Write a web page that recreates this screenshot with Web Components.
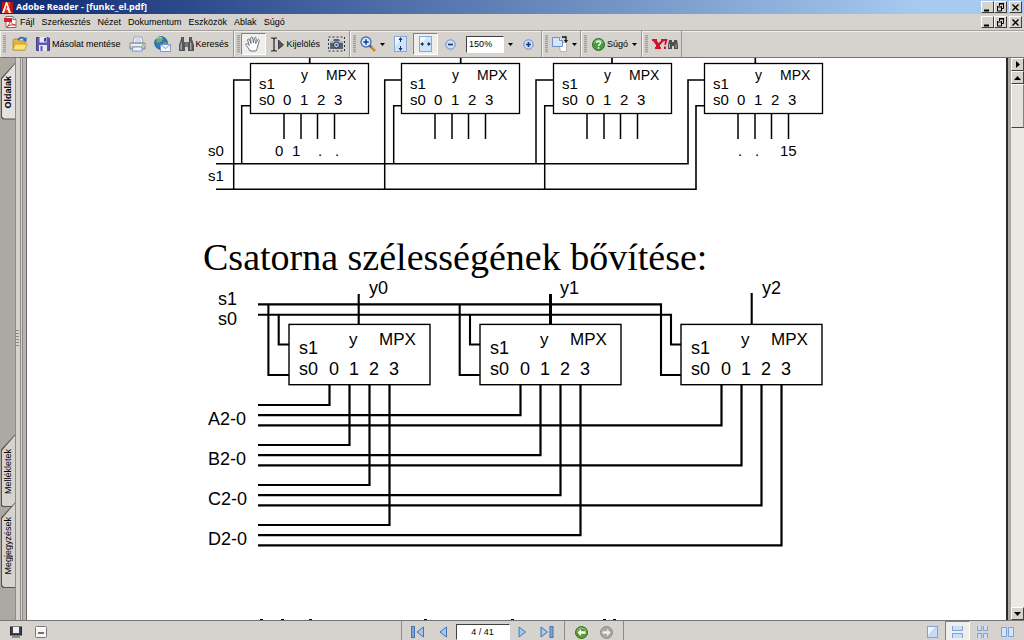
<!DOCTYPE html>
<html lang="hu">
<head>
<meta charset="utf-8">
<title>Adobe Reader - [funkc_el.pdf]</title>
<style>
  html, body {
    margin: 0;
    height: 100%;
  }

  body {
    font: 9px/12px "Liberation Sans", Arial, sans-serif;
    color: #000;
    background: #d6d3ce;
    overflow: hidden;
    --face: #d6d3ce;
    --dock: #aca8a2;
  }
</style>
</head>
<body>
<reader-window>
  <title-bar slot="title">Adobe Reader - [funkc_el.pdf]</title-bar>
  <menu-bar slot="menu">
    <button>Fájl</button>
    <button>Szerkesztés</button>
    <button>Nézet</button>
    <button>Dokumentum</button>
    <button>Eszközök</button>
    <button>Ablak</button>
    <button>Súgó</button>
  </menu-bar>

  <tool-group slot="tools">
    <tool-button icon="open" name="Megnyitás"></tool-button>
    <tool-button icon="save">Másolat mentése</tool-button>
    <tool-button icon="print" name="Nyomtatás"></tool-button>
    <tool-button icon="mail" name="E-mail"></tool-button>
    <tool-button icon="find">Keresés</tool-button>
  </tool-group>
  <tool-group slot="tools">
    <tool-button icon="hand" name="Kéz" pressed></tool-button>
    <tool-button icon="select">Kijelölés</tool-button>
    <tool-button icon="camera" name="Pillanatfelvétel"></tool-button>
  </tool-group>
  <tool-group slot="tools">
    <tool-button icon="zoom" name="Nagyítás" drop></tool-button>
    <tool-button icon="fitpage" name="Teljes oldal"></tool-button>
    <tool-button icon="fitwidth" name="Oldalszélesség" pressed></tool-button>
    <tool-button icon="minus" name="Kicsinyítés"></tool-button>
    <zoom-select></zoom-select>
    <tool-button icon="plus" name="Nagyítás"></tool-button>
  </tool-group>
  <tool-group slot="tools">
    <tool-button icon="rotate" name="Forgatás" drop></tool-button>
  </tool-group>
  <tool-group slot="tools">
    <tool-button icon="help" drop>Súgó</tool-button>
  </tool-group>
  <tool-group slot="tools">
    <tool-button icon="yahoo" name="Yahoo"></tool-button>
  </tool-group>

  <side-tabs slot="side">
    <side-tab slot="top" active>Oldalak</side-tab>
    <side-tab>Mellékletek</side-tab>
    <side-tab>Megjegyzések</side-tab>
  </side-tabs>

  <pdf-page slot="page">
    <mpx-tree></mpx-tree>
    <h1>Csatorna szélességének bővítése:</h1>
    <mpx-width></mpx-width>
    <next-line></next-line>
  </pdf-page>

  <scroll-column slot="scroll"></scroll-column>
  <status-bar slot="status"></status-bar>
</reader-window>

<script>
const ICONS = {
  adobe: [11, 11, `<rect width="11" height="11" fill="#e23a22"/><path d="M0 0h4L1 9H0zM11 0H8v10h3z" fill="#b8160e"/><path d="M5 0l4 11H7L5.500 7.500 4 8l1.500-3L4.500 3 2 11H0L4 0z" fill="#fff"/>`],
  pdf: [13, 12, `<path d="M2 .5h7l3 3v8H2z" fill="#fff" stroke="#777"/><path d="M9 .5v3h3" fill="#ddd" stroke="#777"/><path d="M0 2h8v4H0z" fill="#d8222a"/><path d="M3 11C5 9 6.500 6 6 4.500 7 7 9 9 11.500 9 8 8.500 5 9 3 11z" fill="none" stroke="#d8222a"/>`],
  open: [16, 16, `<path d="M1 5l1-2h4l1 2h6v9H1z" fill="#e9b63a" stroke="#a67c1c" stroke-width=".7"/><path d="M1 14L3 8h12l-2 6z" fill="#ffe36b" stroke="#b8902a" stroke-width=".7"/><path d="M6 4C8 1 11 1 13 3" fill="none" stroke="#2a68b8" stroke-width="1.700"/><path d="M14.500 1v5l-4-2z" fill="#2a68b8"/>`],
  save: [14, 14, `<path d="M.5.5h11l2 1v12H.5z" fill="#5e5aae" stroke="#45418c"/><rect x="3.500" y="0" width="7" height="5.500" fill="#e8ecf8"/><rect x="8" y="1" width="2" height="3.500" fill="#45418c"/><rect x="3" y="8" width="8" height="6" fill="#e8e8f0"/><rect x="4.500" y="9" width="2" height="5" fill="#5e5aae"/>`],
  print: [17, 16, `<path d="M4 7l1-6h8l1 6z" fill="#f7f9ff" stroke="#8a94a8" stroke-width=".8"/><path d="M6 3h6M6 5h6" stroke="#a9bfe4"/><path d="M1 7h15v6H1z" fill="#c5c5c9" stroke="#77777c" stroke-width=".8"/><path d="M1.500 8h14v2h-14z" fill="#ededf0"/><path d="M4 11h9v4H3z" fill="#eef5ff" stroke="#5a86c4" stroke-width=".8"/><circle cx="14" cy="9" r=".8" fill="#3a3"/>`],
  mail: [17, 16, `<circle cx="7" cy="7" r="6.400" fill="#2f78c0" stroke="#1c4f8c" stroke-width=".7"/><path d="M3 3c2-2 5-2 6 0L7 6l-3 1-2-1zM9 7l4-1-1 4-3 2z" fill="#6eb35a"/><path d="M2 3c2-2 5-2 6-1" stroke="#b7dcff" fill="none"/><path d="M6.500 8.500h10v7h-10z" fill="#f1f6ff" stroke="#6d8cc0" stroke-width=".8"/><path d="M6.500 8.500l5 4 5-4" fill="none" stroke="#6d8cc0" stroke-width=".8"/>`],
  find: [15, 14, `<path d="M2 2h3v3h1v9H0V8zM13 2h-3v3H9v9h6V8z" fill="#55565a"/><path d="M6 5h3v5H6z" fill="#77787c"/><path d="M1.500 8l1.500-4v9H1.500zM11 4l1.500 3v6H11z" fill="#a6a7aa"/><path d="M2 1h3M10 1h3" stroke="#333" stroke-width="1.500"/>`],
  hand: [16, 16, `<path d="M5 15C4 12 1 10 .7 8.300 1.500 7 3 8 4.200 9.500L2.600 4C3 2.500 4.200 2.600 4.700 4L6 7.500 5.700 2C6.200.7 7.500.7 7.800 2L8.400 7 9.500 2C10 1 11.300 1.200 11.200 2.600L10.600 7.500l2-3.500c.8-1 1.900-.3 1.600.8L12.700 10c-.3 2-.7 3-1.700 5z" fill="#fff" stroke="#5c6675" stroke-width=".9"/>`],
  select: [15, 15, `<path d="M1 1h2l1 1 1-1h2M4 2v11M1 14h2l1-1 1 1h2" fill="none" stroke="#222" stroke-width="1.200"/><path d="M8.500 3v9l5-4z" fill="#555" stroke="#222" stroke-width=".7"/>`],
  camera: [17, 16, `<rect x=".5" y="1" width="16" height="14" fill="none" stroke="#333" stroke-dasharray="2 2"/><path d="M2 5h3l1-2h5l1 2h3v8H2z" fill="#596273"/><path d="M2 5h13v2H2z" fill="#a8b1bf"/><circle cx="8.500" cy="9" r="3" fill="#bcd7ef" stroke="#232b38"/><circle cx="8.500" cy="9" r="1.200" fill="#325c94"/>`],
  zoom: [16, 16, `<path d="M10 10l5 5" stroke="#c98b2c" stroke-width="2.600"/><path d="M9.500 9.500l1.500 1.500" stroke="#555" stroke-width="2"/><circle cx="6" cy="6" r="5" fill="#d8ecff" stroke="#4a6fb0" stroke-width="1.300"/><path d="M3.300 6h5.400M6 3.300v5.400" stroke="#12398c" stroke-width="1.500"/>`],
  fitpage: [13, 16, `<rect x=".5" y=".5" width="12" height="15" fill="#cfe3fb" stroke="#85a9d8"/><path d="M1 1h7L1 10z" fill="#f2f8ff"/><path d="M6.500 3v3M6.500 10v3" stroke="#17356f"/><path d="M4.500 4l2-3 2 3zM4.500 12l2 3 2-3z" fill="#17356f"/>`],
  fitwidth: [13, 16, `<rect x=".5" y=".5" width="12" height="15" fill="#cfe3fb" stroke="#85a9d8"/><path d="M1 1h7L1 10z" fill="#f2f8ff"/><path d="M2 8h3M8 8h3" stroke="#17356f"/><path d="M4 6L1 8l3 2zM9 6l3 2-3 2z" fill="#17356f"/>`],
  minus: [11, 11, `<circle cx="5.500" cy="5.500" r="4.700" fill="#cfe1f7" stroke="#6688bd"/><path d="M3 5.500h5" stroke="#173c86" stroke-width="1.700"/>`],
  plus: [11, 11, `<circle cx="5.500" cy="5.500" r="4.700" fill="#cfe1f7" stroke="#6688bd"/><path d="M3 5.500h5M5.500 3v5" stroke="#173c86" stroke-width="1.700"/>`],
  rotate: [16, 16, `<path d="M6.500 6.500h8v9h-6z" fill="#fff" stroke="#aaa" stroke-width=".8"/><path d="M.5 1.500h7l3 3v6H.5z" fill="#d5e6fb" stroke="#6b93c9"/><path d="M7.500 1.500v3h3" fill="#fff" stroke="#6b93c9"/><path d="M10 1h4v4" fill="none" stroke="#111" stroke-width="1.300"/><path d="M12 4h4l-2 3z" fill="#111"/>`],
  help: [13, 13, `<circle cx="6.500" cy="6.500" r="6" fill="#4c9a3f" stroke="#2c6e26"/><path d="M2 5c1-4 8-4 9 0" fill="none" stroke="#9ed18d"/><path d="M4.700 5c0-2.500 3.800-2.500 3.800 0 0 1.500-1.900 1.400-1.900 3" fill="none" stroke="#fff" stroke-width="1.500"/><circle cx="6.600" cy="9.900" r=".9" fill="#fff"/>`],
  yahoo: [26, 12, `<path d="M0 1h5v2L6.500 5 9 3V1h4v2h-1L8 7v2h1v2H3V9h1V7L1 3H0z" fill="#d4122a"/><path d="M13 1h2.500L14 7h-1.500zM12 8.500h2V11h-2z" fill="#d4122a"/><path d="M17 2h3v2h2V2h3l1 5v4h-4V8h-2v3h-4V7z" fill="#4e5053"/><path d="M17.500 6v4M24 6v4" stroke="#aaa"/>`],
  screen: [12, 12, `<rect x=".5" y="1" width="11" height="8" fill="#444" stroke="#222"/><rect x="3" y="1" width="6" height="6" fill="#e8f0fc"/><path d="M2 11h8" stroke="#777" stroke-width="1.500"/>`],
  panel: [12, 12, `<rect x=".5" y=".5" width="11" height="11" rx="1" fill="#f5f5f5" stroke="#77777b"/><path d="M1 1h10v2H1z" fill="#fff"/><path d="M3 7h6" stroke="#444" stroke-width="1.500"/>`],
  first: [14, 12, `<rect x=".5" y=".5" width="3" height="11" fill="#7fa6d8" stroke="#4474ae"/><path d="M12.500 1v10L6 6z" fill="#a5c6ee" stroke="#4474ae"/>`],
  prev: [9, 12, `<path d="M7.500 1v10L1 6z" fill="#a5c6ee" stroke="#4474ae"/>`],
  next: [9, 12, `<path d="M1 1v10l6.500-5z" fill="#a5c6ee" stroke="#4474ae"/>`],
  last: [14, 12, `<path d="M1 1v10l6.500-5z" fill="#a5c6ee" stroke="#4474ae"/><rect x="10" y=".5" width="3" height="11" fill="#7fa6d8" stroke="#4474ae"/>`],
  back: [13, 13, `<circle cx="6.500" cy="6.500" r="6" fill="#5b9a32" stroke="#376e1c"/><path d="M2 5c1-4 8-4 9 0" fill="none" stroke="#a6cc82"/><path d="M2.500 6.500L6 3v2.300h4.500v2.400H6V10z" fill="#fff"/>`],
  forward: [13, 13, `<circle cx="6.500" cy="6.500" r="6" fill="#aaa8a5" stroke="#8e8c89"/><path d="M10.500 6.500L7 3v2.300H2.500v2.400H7V10z" fill="#eee"/>`],
  single: [11, 12, `<rect x=".5" y=".5" width="10" height="11" fill="#c3dafa" stroke="#7ea2d6"/><path d="M1 1h7L1 9z" fill="#eef5ff"/>`],
  continuous: [11, 12, `<path d="M.5 0v4.500h10V0M.5 12V7.500h10V12" fill="#c9defa" stroke="#7ea2d6"/>`],
  facing: [11, 12, `<path d="M.5 0v4.500h4V0M6.500 0v4.500h4V0M.5 12V7.500h4V12M6.500 12V7.500h4V12" fill="#c9defa" stroke="#7ea2d6"/>`],
  book: [13, 12, `<path d="M.5 1.500h5v9h-5zM7.500 1.500h5v9h-5z" fill="#d5e6fb" stroke="#7ea2d6"/>`],
  min: [9, 9, `<path d="M1 7.500h5" stroke="#000" stroke-width="2"/>`],
  restore: [9, 9, `<path d="M3 .5h5M3.500 0v3M7.500 0v5.500H6" fill="none" stroke="#000"/><path d="M3 1h5M1 4h5" stroke="#000"/><path d="M1.500 3v5h4V3" fill="none" stroke="#000"/>`],
  close: [9, 9, `<path d="M1.500 1.500l6 6M7.500 1.500l-6 6" stroke="#000" stroke-width="1.400"/>`]
};

class UiIcon extends HTMLElement {
  constructor() {
    super();
    this.attachShadow({ mode: 'open' });
  }

  connectedCallback() {
    const [w, h, shape] = ICONS[this.getAttribute('name')];
    this.shadowRoot.innerHTML = `
      <style>
        :host { display: inline-flex; flex: none; }
      </style>
      <svg width="${w}" height="${h}" viewBox="0 0 ${w} ${h}" aria-hidden="true">${shape}</svg>
    `;
  }
}
customElements.define('ui-icon', UiIcon);

// minimise / restore / close, used by the frame and by the document window
class WindowButtons extends HTMLElement {
  constructor() {
    super();
    this.attachShadow({ mode: 'open' });
    this.shadowRoot.innerHTML = `
      <style>
        :host { display: flex; margin-left: auto; padding-right: 2px; }
        button {
          display: flex;
          align-items: center;
          justify-content: center;
          width: 13px;
          height: 12px;
          padding: 0;
          background: var(--face);
          border: 1px solid;
          border-color: #fff #404040 #404040 #fff;
        }
        button:last-child { margin-left: 2px; }
      </style>
      <button aria-label="Kis méret"><ui-icon name="min"></ui-icon></button>
      <button aria-label="Előző méret"><ui-icon name="restore"></ui-icon></button>
      <button aria-label="Bezárás"><ui-icon name="close"></ui-icon></button>
    `;
  }
}
customElements.define('window-buttons', WindowButtons);

class TitleBar extends HTMLElement {
  constructor() {
    super();
    this.attachShadow({ mode: 'open' });
    this.shadowRoot.innerHTML = `
      <style>
        :host {
          display: flex;
          align-items: center;
          gap: 3px;
          height: 14px;
          padding-left: 2px;
          background: linear-gradient(90deg, #0d2a72, #a6caf0 90%);
          color: #fff;
          font: bold 9px/14px "Open Sans", "DejaVu Sans", sans-serif;
        }
      </style>
      <ui-icon name="adobe"></ui-icon>
      <span><slot></slot></span>
      <window-buttons></window-buttons>
    `;
  }
}
customElements.define('title-bar', TitleBar);

class MenuBar extends HTMLElement {
  constructor() {
    super();
    this.attachShadow({ mode: 'open' });
    this.shadowRoot.innerHTML = `
      <style>
        :host {
          display: flex;
          align-items: center;
          height: 16px;
          padding-left: 4px;
          background: var(--face);
        }
        nav { display: flex; gap: 1px; }
        ::slotted(button) {
          font: inherit;
          color: inherit;
          background: none;
          border: 0;
          padding: 0 3px;
        }
      </style>
      <ui-icon name="pdf"></ui-icon>
      <nav><slot></slot></nav>
      <window-buttons></window-buttons>
    `;
  }
}
customElements.define('menu-bar', MenuBar);

class ToolGroup extends HTMLElement {
  constructor() {
    super();
    this.attachShadow({ mode: 'open' });
    this.shadowRoot.innerHTML = `
      <style>
        :host {
          display: flex;
          align-items: center;
          padding-left: 2px;
          border-right: 1px solid #9a9894;
          border-left: 1px solid #f4f2ee;
        }
        i {
          width: 3px;
          height: 18px;
          margin-right: 1px;
          background: repeating-linear-gradient(#a3a19d 0 1px, #c6c4bf 1px 2px);
        }
      </style>
      <i></i><slot></slot>
    `;
  }
}
customElements.define('tool-group', ToolGroup);

class ToolButton extends HTMLElement {
  constructor() {
    super();
    this.attachShadow({ mode: 'open' });
  }

  connectedCallback() {
    const name = this.getAttribute('name');
    this.shadowRoot.innerHTML = `
      <style>
        :host { display: block; }
        button {
          display: flex;
          align-items: center;
          justify-content: center;
          gap: 2px;
          min-width: 25px;
          height: 22px;
          padding: 0 ${name ? 2 : 3}px;
          box-sizing: border-box;
          border: 1px solid transparent;
          background: none;
          font: inherit;
          color: inherit;
          white-space: nowrap;
        }
        :host([pressed]) button {
          background: #efeeeb;
          border-color: #848280 #fff #fff #848280;
        }
        slot { display: ${name ? 'none' : 'block'}; }
        svg { flex: none; margin-left: 2px; }
      </style>
      <button ${name ? `aria-label="${name}"` : ''}>
        <ui-icon name="${this.getAttribute('icon')}"></ui-icon>
        <slot></slot>
        ${this.hasAttribute('drop') ? '<svg width="5" height="3"><path d="M0 0h5L2.500 3z"/></svg>' : ''}
      </button>
    `;
  }
}
customElements.define('tool-button', ToolButton);

class ZoomSelect extends HTMLElement {
  constructor() {
    super();
    this.attachShadow({ mode: 'open' });
    this.shadowRoot.innerHTML = `
      <style>
        :host { display: flex; padding: 0 3px; }
        label { display: flex; align-items: center; gap: 4px; }
        select {
          appearance: none;
          width: 38px;
          height: 17px;
          padding: 0 2px;
          border: 1px solid;
          border-color: #404040 #fff #fff #404040;
          border-radius: 0;
          background: #fff;
          color: #000;
          font: inherit;
        }
      </style>
      <label>
        <select aria-label="Nagyítás mértéke"><option>150%</option></select>
        <svg width="5" height="3"><path d="M0 0h5L2.500 3z"/></svg>
      </label>
    `;
  }
}
customElements.define('zoom-select', ZoomSelect);

class SideTab extends HTMLElement {
  constructor() {
    super();
    this.attachShadow({ mode: 'open' });
    this.shadowRoot.innerHTML = `
      <style>
        :host {
          display: block;
          --cut: polygon(100% 0, 100% 100%, 2px 100%, 0 calc(100% - 2px), 0 15px);
        }
        button {
          display: block;
          width: 14px;
          padding: 1px 0 1px 1px;
          border: 0;
          background: #55534f;
          clip-path: var(--cut);
          font: inherit;
          color: inherit;
        }
        span {
          display: block;
          padding: 14px 0 12px;
          background: var(--face);
          clip-path: var(--cut);
        }
        b {
          display: block;
          font-weight: inherit;
          line-height: 13px;
          writing-mode: vertical-rl;
          transform: rotate(180deg);
        }
        :host([active]) { font-weight: bold; }
        :host([active]) span { background: #e4e2de; padding: 12px 0 10px; }
      </style>
      <button><span><b><slot></slot></b></span></button>
    `;
  }
}
customElements.define('side-tab', SideTab);

class SideTabs extends HTMLElement {
  constructor() {
    super();
    this.attachShadow({ mode: 'open' });
    this.shadowRoot.innerHTML = `
      <style>
        :host { display: flex; background: var(--dock); }
        nav {
          display: flex;
          flex-direction: column;
          width: 14px;
          padding: 5px 0 32px 1px;
        }
        .space { flex: 1; }
        ::slotted(side-tab:not(:last-child)) { margin-bottom: -5px; }
        .splitter {
          display: flex;
          align-items: center;
          width: 6px;
          background: var(--face);
          border-left: 1px solid #8e8b86;
          border-right: 1px solid #8e8b86;
          box-sizing: border-box;
        }
        .splitter i {
          width: 3px;
          height: 18px;
          background: repeating-linear-gradient(#8e8b86 0 1px, var(--face) 1px 3px);
        }
        .edge {
          width: 6px;
          background: linear-gradient(90deg, #d6d3ce 1px, #8e8b86 1px 2px, #b8b5af 2px 5px, #6a6864 5px);
        }
      </style>
      <nav><slot name="top"></slot><div class="space"></div><slot></slot></nav>
      <div class="splitter"><i></i></div>
      <div class="edge"></div>
    `;
  }
}
customElements.define('side-tabs', SideTabs);

class PdfPage extends HTMLElement {
  constructor() {
    super();
    this.attachShadow({ mode: 'open' });
    this.shadowRoot.innerHTML = `
      <style>
        :host {
          display: block;
          min-width: 0;
          overflow: hidden;
          background: #fff;
          border-right: 2px solid #2c2c2c;
        }
        article { width: 627px; max-width: 100%; margin: 0 auto; }
        ::slotted(h1) {
          margin: 32px 0 0;
          font: 38px/44px "Liberation Serif", "Times New Roman", serif;
          white-space: nowrap;
        }
      </style>
      <article><slot></slot></article>
    `;
  }
}
customElements.define('pdf-page', PdfPage);

// select inputs, output and the four data inputs of one multiplexer
function muxText(x, t) {
  return `
    <g font-size="${t.small}">
      <text x="${x + t.y}" y="${t.top}">y</text>
      <text x="${x + t.mpx}" y="${t.top}">MPX</text>
    </g>
    <text x="${x + t.s}" y="${t.s1}">s1</text>
    <text x="${x + t.s}" y="${t.s0}">s0</text>
    ${[0, 1, 2, 3].map(n => `<text x="${x + t.digit + n * t.step}" y="${t.s0}">${n}</text>`).join('')}
  `;
}

const DRAWING_STYLE = `
  <style>
    :host { display: block; }
    svg { display: block; overflow: visible; font-family: "Liberation Sans", Arial, sans-serif; }
    path, rect { fill: none; stroke: #000; }
  </style>
`;

class MpxTree extends HTMLElement {
  constructor() {
    super();
    this.attachShadow({ mode: 'open' });
    const boxes = [47, 198, 350, 501];
    const t = { small: 14, y: 51, mpx: 76, top: 22, s: 9, s1: 31, s0: 47, digit: 33, step: 17 };
    this.shadowRoot.innerHTML = `
      ${DRAWING_STYLE}
      <svg width="627" height="145" viewBox="0 0 627 145" font-size="15">
        ${boxes.map(x => `
          <rect x="${x + .5}" y="5.500" width="118" height="50" stroke-width="1.300"/>
          <path d="M${x + 34} 55v26M${x + 51} 55v26M${x + 67.5} 55v26M${x + 84.5} 55v26" stroke-width="1.500"/>
          ${muxText(x, t)}
        `).join('')}
        <path d="M106.700 0v5M257.700 0v5M409 0v5M552.300 0v5" stroke-width="1.700"/>
        <path d="M13 105.700H485V22h17M13 131.300H493V47.700h9" stroke-width="1.600"/>
        <path d="M47 22H30.700V131M47 47.700H38.700V105M199 22H181.700V131M199 47.700H190.700V105M350 22H333V105M350 47.700H341.700V131" stroke-width="1.500"/>
        <text x="5" y="98">s0</text>
        <text x="5" y="123">s1</text>
        <text x="72" y="98">0</text>
        <text x="89" y="98">1</text>
        <text x="115" y="98">.</text>
        <text x="132" y="98">.</text>
        <text x="535" y="98">.</text>
        <text x="552" y="98">.</text>
        <text x="577" y="98">15</text>
      </svg>
    `;
  }
}
customElements.define('mpx-tree', MpxTree);

class MpxWidth extends HTMLElement {
  constructor() {
    super();
    this.attachShadow({ mode: 'open' });
    const boxes = [86, 277, 478];
    const t = { small: 17, y: 60, mpx: 90, top: 66, s: 10, s1: 75, s0: 96, digit: 40, step: 20 };
    // every data bus has three bits, one for each multiplexer
    const buses = ['A2-0', 'B2-0', 'C2-0', 'D2-0'].map((name, row) => {
      const top = 126 + row * 40;
      const bits = boxes.map((x, bit) =>
        `<path d="M55 ${top + bit * 10.2}H${x + 40.5 + row * 20}V106"/>`);
      return bits.join('') + `<text x="5" y="${top + 20}" stroke="none">${name}</text>`;
    });
    this.shadowRoot.innerHTML = `
      ${DRAWING_STYLE}
      <svg width="627" height="281" viewBox="0 0 627 281" font-size="18">
        <g stroke-width="1.400">
          ${boxes.map(x => `<rect x="${x}" y="45.400" width="141" height="60.300"/>`).join('')}
        </g>
        ${boxes.map(x => muxText(x, t)).join('')}
        <g stroke-width="2.100">
          <path d="M55 25.400H458V96h20M55 35.700H468V65.500h10"/>
          <path d="M65.400 25V96H86M75.700 36V65.500H86M256.700 25V96H277M267 36V65.500H277"/>
          <path d="M155.700 15v30M548.700 14v31"/>
          <path d="M347.500 15v30" stroke-width="3"/>
        </g>
        <g stroke-width="2.200">${buses.join('')}</g>
        <text x="15" y="26">s1</text>
        <text x="15" y="46">s0</text>
        <text x="166" y="15">y0</text>
        <text x="357" y="15">y1</text>
        <text x="559" y="15">y2</text>
      </svg>
    `;
  }
}
customElements.define('mpx-width', MpxWidth);

// tops of the letters of the line that the window cuts off
class NextLine extends HTMLElement {
  constructor() {
    super();
    this.attachShadow({ mode: 'open' });
    this.shadowRoot.innerHTML = `
      ${DRAWING_STYLE}
      <style>:host { margin-top: 59px; }</style>
      <svg width="627" height="2" viewBox="0 0 627 2">
        <path d="M57 .5h3M78 .5h3M106 .5h3M221 .5h3M308 .5h3M400 .5h3M410 .5h3" stroke-width="1"/>
      </svg>
    `;
  }
}
customElements.define('next-line', NextLine);

class ScrollColumn extends HTMLElement {
  constructor() {
    super();
    this.attachShadow({ mode: 'open' });
    this.shadowRoot.innerHTML = `
      <style>
        :host {
          display: flex;
          flex-direction: column;
          width: 13px;
          background: #ebe9e6;
          border-left: 3px solid var(--dock);
        }
        button {
          display: flex;
          align-items: center;
          justify-content: center;
          height: 13px;
          padding: 0;
          background: var(--face);
          border: 1px solid;
          border-color: #fff #404040 #404040 #fff;
        }
        .track { flex: 1; }
        .thumb {
          height: 8%;
          background: #e4e2de;
          border: 1px solid;
          border-color: #fff #848280 #404040 #fff;
        }
      </style>
      <button aria-label="Eszköztár"><svg width="4" height="7"><path d="M0 0v7l4-3.500z"/></svg></button>
      <button aria-label="Fel"><svg width="7" height="4"><path d="M0 4h7L3.500 0z"/></svg></button>
      <div class="track"><div class="thumb"></div></div>
      <button aria-label="Le"><svg width="7" height="4"><path d="M0 0h7L3.500 4z"/></svg></button>
    `;
  }
}
customElements.define('scroll-column', ScrollColumn);

class StatusBar extends HTMLElement {
  constructor() {
    super();
    this.attachShadow({ mode: 'open' });
    this.shadowRoot.innerHTML = `
      <style>
        :host {
          display: grid;
          grid-template-columns: 1fr auto 1fr;
          height: 20px;
          box-sizing: border-box;
          border-top: 1px solid #777571;
          background: var(--face);
        }
        div { display: flex; align-items: center; }
        .left { padding-left: 3px; }
        .pages, .history { border-left: 1px solid #8e8c88; }
        .pages { padding: 0 4px; }
        .history { padding: 0 4px; border-right: 1px solid #8e8c88; }
        .right { justify-content: flex-end; padding-right: 4px; }
        input {
          width: 54px;
          height: 16px;
          box-sizing: border-box;
          padding: 0;
          border: 1px solid;
          border-color: #404040 #fff #fff #404040;
          background: #fff;
          text-align: center;
          font: inherit;
        }
      </style>
      <div class="left">
        <tool-button icon="screen" name="Teljes képernyő"></tool-button>
        <tool-button icon="panel" name="Eszköztárak elrejtése"></tool-button>
      </div>
      <div>
        <div class="pages">
          <tool-button icon="first" name="Első oldal"></tool-button>
          <tool-button icon="prev" name="Előző oldal"></tool-button>
          <input aria-label="Oldal" value="4 / 41">
          <tool-button icon="next" name="Következő oldal"></tool-button>
          <tool-button icon="last" name="Utolsó oldal"></tool-button>
        </div>
        <div class="history">
          <tool-button icon="back" name="Előző nézet"></tool-button>
          <tool-button icon="forward" name="Következő nézet"></tool-button>
        </div>
      </div>
      <div class="right">
        <tool-button icon="single" name="Egy oldal"></tool-button>
        <tool-button icon="continuous" name="Folyamatos" pressed></tool-button>
        <tool-button icon="facing" name="Folyamatos - páros"></tool-button>
        <tool-button icon="book" name="Páros"></tool-button>
      </div>
    `;
  }
}
customElements.define('status-bar', StatusBar);

class ReaderWindow extends HTMLElement {
  constructor() {
    super();
    this.attachShadow({ mode: 'open' });
    this.shadowRoot.innerHTML = `
      <style>
        :host {
          display: grid;
          grid-template-rows: auto auto auto minmax(0, 1fr) auto;
          height: 100vh;
        }
        .tools {
          display: flex;
          height: 26px;
          border-top: 1px solid #a3a19d;
          border-bottom: 1px solid #77756f;
          box-shadow: inset 0 1px #f0eeea;
        }
        .view {
          display: grid;
          grid-template-columns: auto minmax(0, 1fr) auto;
          min-height: 0;
        }
      </style>
      <slot name="title"></slot>
      <slot name="menu"></slot>
      <div class="tools"><slot name="tools"></slot></div>
      <div class="view">
        <slot name="side"></slot>
        <slot name="page"></slot>
        <slot name="scroll"></slot>
      </div>
      <slot name="status"></slot>
    `;
  }
}
customElements.define('reader-window', ReaderWindow);
</script>
</body>
</html>
